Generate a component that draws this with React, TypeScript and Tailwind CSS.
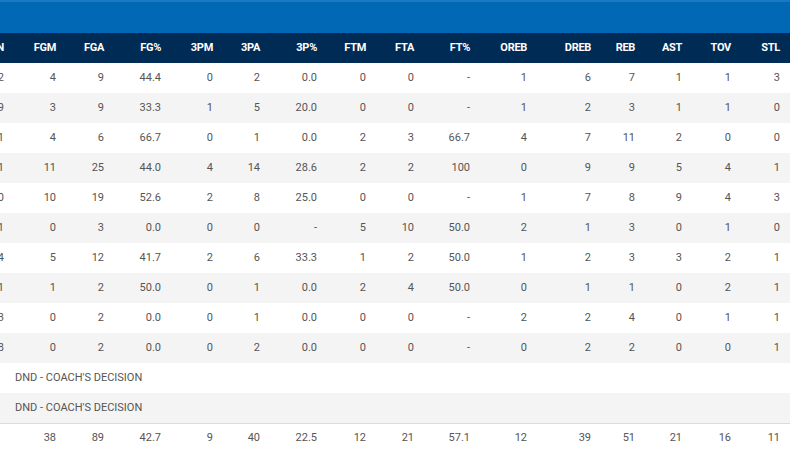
import type { FC } from 'react';

// column order as shown, MIN is scrolled mostly out of view
const cols = ['MIN', 'FGM', 'FGA', 'FG%', '3PM', '3PA', '3P%', 'FTM', 'FTA', 'FT%', 'OREB', 'DREB', 'REB', 'AST', 'TOV', 'STL'];
const widths = [44, 52, 48, 57, 52, 47, 57, 49, 48, 56, 57, 64, 44, 47, 49, 49];

const rows: (string | number)[][] = [
  ['32', 4, 9, '44.4', 0, 2, '0.0', 0, 0, '-', 1, 6, 7, 1, 1, 3],
  ['29', 3, 9, '33.3', 1, 5, '20.0', 0, 0, '-', 1, 2, 3, 1, 1, 0],
  ['31', 4, 6, '66.7', 0, 1, '0.0', 2, 3, '66.7', 4, 7, 11, 2, 0, 0],
  ['41', 11, 25, '44.0', 4, 14, '28.6', 2, 2, '100', 0, 9, 9, 5, 4, 1],
  ['30', 10, 19, '52.6', 2, 8, '25.0', 0, 0, '-', 1, 7, 8, 9, 4, 3],
  ['21', 0, 3, '0.0', 0, 0, '-', 5, 10, '50.0', 2, 1, 3, 0, 1, 0],
  ['24', 5, 12, '41.7', 2, 6, '33.3', 1, 2, '50.0', 1, 2, 3, 3, 2, 1],
  ['21', 1, 2, '50.0', 0, 1, '0.0', 2, 4, '50.0', 0, 1, 1, 0, 2, 1],
  ['13', 0, 2, '0.0', 0, 1, '0.0', 0, 0, '-', 2, 2, 4, 0, 1, 1],
  ['18', 0, 2, '0.0', 0, 2, '0.0', 0, 0, '-', 0, 2, 2, 0, 0, 1],
];

const totals: (string | number)[] = ['', 38, 89, '42.7', 9, 40, '22.5', 12, 21, '57.1', 12, 39, 51, 21, 16, 11];

const StatCell: FC<{ v: string | number }> = ({ v }) => (
  <td className="pr-[10px] text-right whitespace-nowrap">{v}</td>
);

export default function App() {
  return (
    <div className="w-[790px] h-[450px] overflow-hidden bg-white" style={{ fontFamily: 'Roboto, "Liberation Sans", sans-serif' }}>
      <div className="h-[33px] bg-[#0068b5] border-t-2 border-[#1b78c2]" />
      <table className="table-fixed border-collapse -ml-[30px] w-[820px] text-[11px] text-[#555]">
        <colgroup>
          {widths.map((w, i) => (
            <col key={i} style={{ width: w }} />
          ))}
        </colgroup>
        <thead>
          <tr className="h-[30px] bg-[#002b55] text-white">
            {cols.map((c) => (
              <th key={c} className="pr-[10px] text-right font-bold text-[11px] tracking-[-0.3px]">
                {c}
              </th>
            ))}
          </tr>
        </thead>
        <tbody>
          {rows.map((r, i) => (
            <tr key={i} className={i % 2 === 0 ? 'h-[30px] bg-white' : 'h-[30px] bg-[#f4f4f4]'}>
              {r.map((v, j) => (
                <StatCell key={j} v={v} />
              ))}
            </tr>
          ))}
          <tr className="h-[30px] bg-white">
            <td />
            <td colSpan={15} className="pl-px text-left">DND - COACH'S DECISION</td>
          </tr>
          <tr className="h-[30px] bg-[#f4f4f4]">
            <td />
            <td colSpan={15} className="pl-px text-left">DND - COACH'S DECISION</td>
          </tr>
          <tr className="h-[30px] bg-white border-t border-[#dcdcdc]">
            {totals.map((v, j) => (
              <StatCell key={j} v={v} />
            ))}
          </tr>
        </tbody>
      </table>
    </div>
  );
}
